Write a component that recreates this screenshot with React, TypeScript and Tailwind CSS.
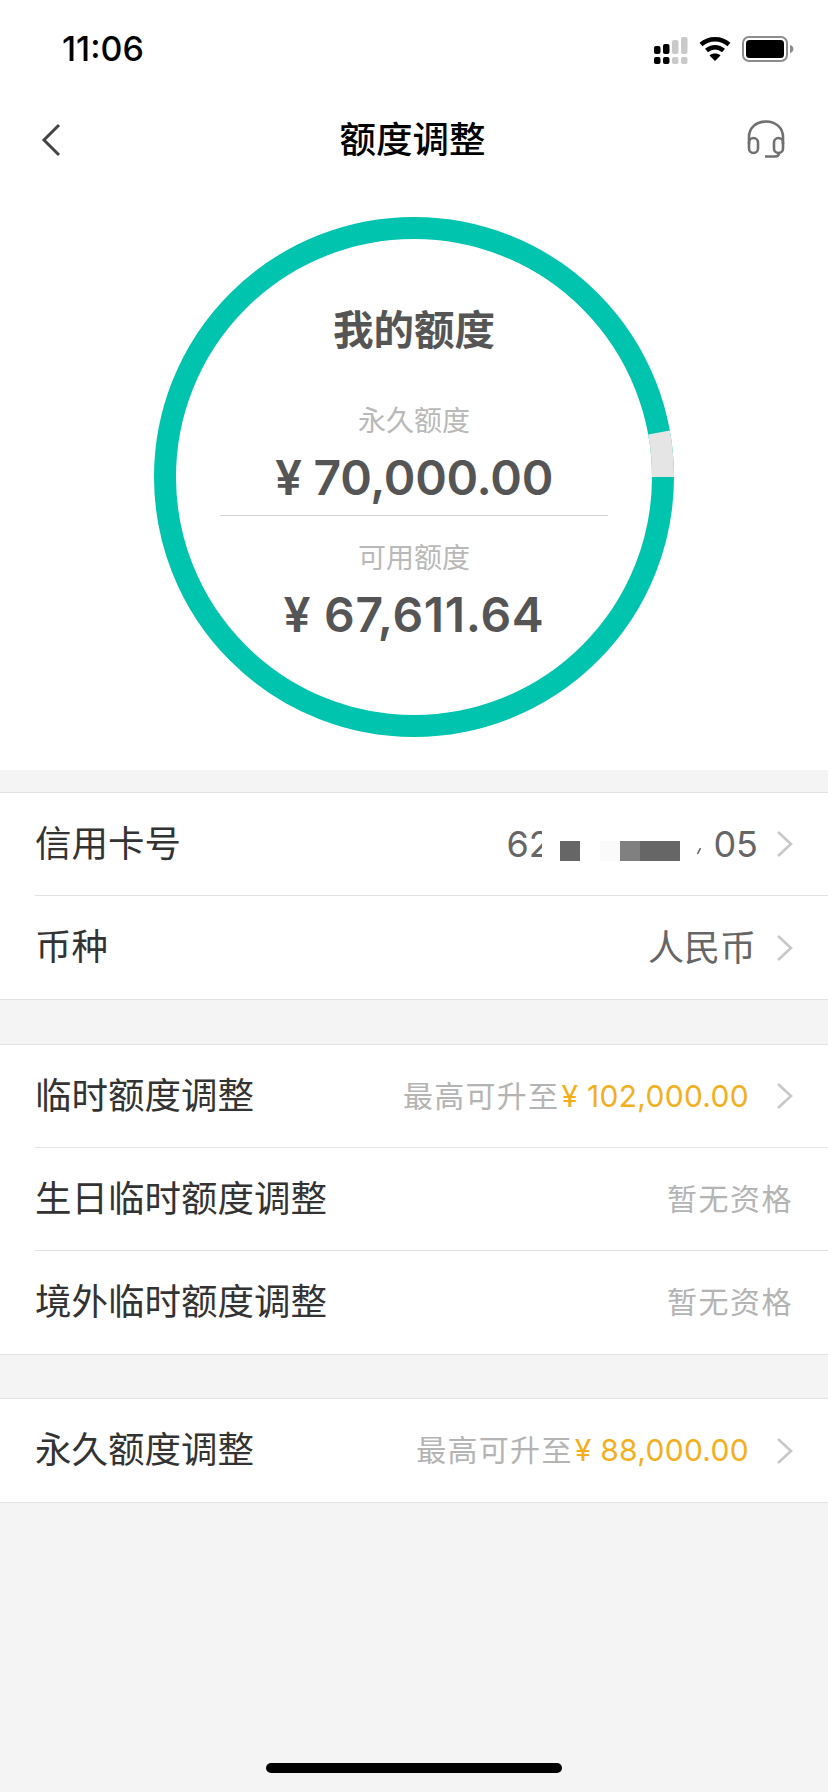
import type { ReactNode } from "react";

const cjk = "font-['Inter','Noto_Sans_CJK_SC',sans-serif]";

function Chevron() {
  return (
    <svg width="18" height="28" viewBox="0 0 18 28" fill="none" className="shrink-0">
      <path d="M2 2l13 12L2 26" stroke="#c8c8c8" strokeWidth="2.6" />
    </svg>
  );
}

function SignalBars() {
  return (
    <svg width="34" height="28" viewBox="0 0 34 28" className="mt-[3px]">
      <rect x="0" y="9" width="6.5" height="8" rx="2" fill="#000" />
      <rect x="9" y="7" width="6.5" height="10" rx="2" fill="#000" />
      <rect x="18" y="3" width="6.5" height="14" rx="2" fill="#c9c9c9" />
      <rect x="27" y="0" width="6.5" height="17" rx="2" fill="#c9c9c9" />
      <rect x="0" y="20" width="6.5" height="7" rx="2" fill="#000" />
      <rect x="9" y="20" width="6.5" height="7" rx="2" fill="#000" />
      <rect x="18" y="20" width="6.5" height="7" rx="2" fill="#c9c9c9" />
      <rect x="27" y="20" width="6.5" height="7" rx="2" fill="#c9c9c9" />
    </svg>
  );
}

function Wifi() {
  return (
    <svg width="32" height="26" viewBox="0 0 32 26" fill="none">
      <path d="M2 8.500c8-7 20-7 28 0" stroke="#000" strokeWidth="4.4" />
      <path d="M7.500 14.500c5-4.400 12-4.400 17 0" stroke="#000" strokeWidth="4.4" />
      <path d="M16 25l-5.500-5.500c3-2.600 8-2.600 11 0z" fill="#000" />
    </svg>
  );
}

function Battery() {
  return (
    <svg width="52" height="26" viewBox="0 0 52 26" fill="none">
      <rect x="1" y="1" width="44" height="24" rx="6" stroke="#8c8c8c" strokeWidth="2" />
      <rect x="4" y="4" width="38" height="18" rx="3.500" fill="#000" />
      <path d="M48 9c2 .6 3.400 2 3.400 4s-1.400 3.400-3.400 4z" fill="#8c8c8c" />
    </svg>
  );
}

function Headset() {
  return (
    <svg width="38" height="38" viewBox="0 0 38 38" fill="none" stroke="#707070" strokeWidth="2.600">
      <path d="M2 24V17C2 8 9 1.500 19 1.500S36 8 36 17v7" />
      <rect x="2" y="18" width="9" height="15" rx="4.500" />
      <rect x="27" y="18" width="9" height="15" rx="4.500" />
      <path d="M32 33c0 2-1 3.500-4 3.500H18" />
    </svg>
  );
}

function Ring() {
  return (
    <svg width="520" height="520" viewBox="0 0 520 520" fill="none" className="absolute inset-0">
      <circle cx="260" cy="260" r="249" stroke="#00c4ad" strokeWidth="22" />
      <path d="M509 260A249 249 0 0 0 505 215.500" stroke="#e5e5e5" strokeWidth="22" />
    </svg>
  );
}

function Amount({ label, value, wide }: { label: string; value: string; wide?: boolean }) {
  return (
    <div className="flex flex-col items-center">
      <div className="text-[28px] leading-[40px] text-[#b9b9b9]">{label}</div>
      <div className={`mt-[8px] text-[48px] leading-[58px] font-semibold text-[#555555] ${wide ? "tracking-[0.7px]" : "tracking-[-0.3px]"}`}>{value}</div>
    </div>
  );
}

function Row({ label, children, arrow, last }: { label: string; children?: ReactNode; arrow?: boolean; last?: boolean }) {
  return (
    <div className="pl-[35px]">
      <div className={`flex h-[103px] items-center justify-between pr-[34px] ${last ? "" : "border-b border-[#e2e2e2]"}`}>
        <span className="text-[36.5px] text-[#333333]">{label}</span>
        <div className="flex items-center">
          {children}
          {arrow && <span className="ml-[20px] flex"><Chevron /></span>}
        </div>
      </div>
    </div>
  );
}

function Section({ children }: { children: ReactNode }) {
  return <div className="border-y border-[#e2e2e2] bg-white">{children}</div>;
}

function Limit({ prefix, amount }: { prefix: string; amount: string }) {
  return (
    <span className="mr-[7px] text-[30px] text-[#b4b4b4]">
      <span className="tracking-[1.3px]">{prefix}</span>
      <span className="ml-[2px] tracking-[0.3px] text-[#f5ae1c]">{amount}</span>
    </span>
  );
}

function NoQualification() {
  return <span className="mr-[1px] text-[30px] tracking-[1.5px] text-[#b4b4b4]">暂无资格</span>;
}

export default function App() {
  return (
    <div className={`relative flex h-[1792px] w-[828px] flex-col overflow-hidden bg-[#f4f4f4] ${cjk}`}>
      <div className="bg-white">
        <div className="flex h-[90px] items-center justify-between pt-[8px] pl-[62px] pr-[34px]">
          <span className="text-[34px] leading-[40px] font-medium text-black">11:06</span>
          <div className="flex items-center gap-[11px]">
            <SignalBars />
            <Wifi />
            <Battery />
          </div>
        </div>
        <div className="flex h-[100px] items-center justify-between pl-[40px] pr-[43px]">
          <div className="w-[38px]">
            <svg width="22" height="34" viewBox="0 0 22 34" fill="none">
              <path d="M19 2L4 17l15 15" stroke="#444" strokeWidth="3" />
            </svg>
          </div>
          <span className="mt-[1px] text-[36.5px] font-medium text-black">额度调整</span>
          <div className="mb-[3px] flex">
            <Headset />
          </div>
        </div>
        <div className="flex h-[580px] justify-center pt-[27px]">
          <div className="relative flex h-[520px] w-[520px] flex-col items-center">
            <Ring />
            <div className="mt-[84px] text-[40.5px] leading-[60px] font-bold text-[#555555]">我的额度</div>
            <div className="mt-[40px] w-[388px] border-b border-[#d2d2d2] pb-[8px]">
              <Amount label="永久额度" value="¥ 70,000.00" />
            </div>
            <div className="mt-[22px]">
              <Amount label="可用额度" value="¥ 67,611.64" wide />
            </div>
          </div>
        </div>
      </div>

      <div className="mt-[22px]">
        <Section>
          <Row label="信用卡号" arrow>
            <div className="mr-[-2px] flex items-center text-[36px] text-[#666666]">
              <span className="w-[36px] overflow-hidden">62</span>
              <span className="mt-[14px] ml-[18px] h-[20px] w-[20px] bg-[#666666]" />
              <span className="mt-[14px] ml-[20px] h-[20px] w-[20px] bg-[#fafafa]" />
              <span className="mt-[14px] h-[20px] w-[20px] bg-[#808080]" />
              <span className="mt-[14px] h-[20px] w-[40px] bg-[#666666]" />
              <svg width="4" height="6" viewBox="0 0 4 6" className="mt-[14px] ml-[17px]">
                <path d="M.5 6L3.500 0" stroke="#666" strokeWidth="1.500" />
              </svg>
              <span className="ml-[12px]">05</span>
            </div>
          </Row>
          <Row label="币种" arrow last>
            <span className="text-[36px] text-[#666666]">人民币</span>
          </Row>
        </Section>
      </div>

      <div className="mt-[44px]">
        <Section>
          <Row label="临时额度调整" arrow>
            <Limit prefix="最高可升至" amount="¥ 102,000.00" />
          </Row>
          <Row label="生日临时额度调整">
            <NoQualification />
          </Row>
          <Row label="境外临时额度调整" last>
            <NoQualification />
          </Row>
        </Section>
      </div>

      <div className="mt-[43px]">
        <Section>
          <Row label="永久额度调整" arrow last>
            <Limit prefix="最高可升至" amount="¥ 88,000.00" />
          </Row>
        </Section>
      </div>

      <div className="absolute bottom-[19px] left-[266px] h-[10px] w-[296px] rounded-full bg-black" />
    </div>
  );
}
